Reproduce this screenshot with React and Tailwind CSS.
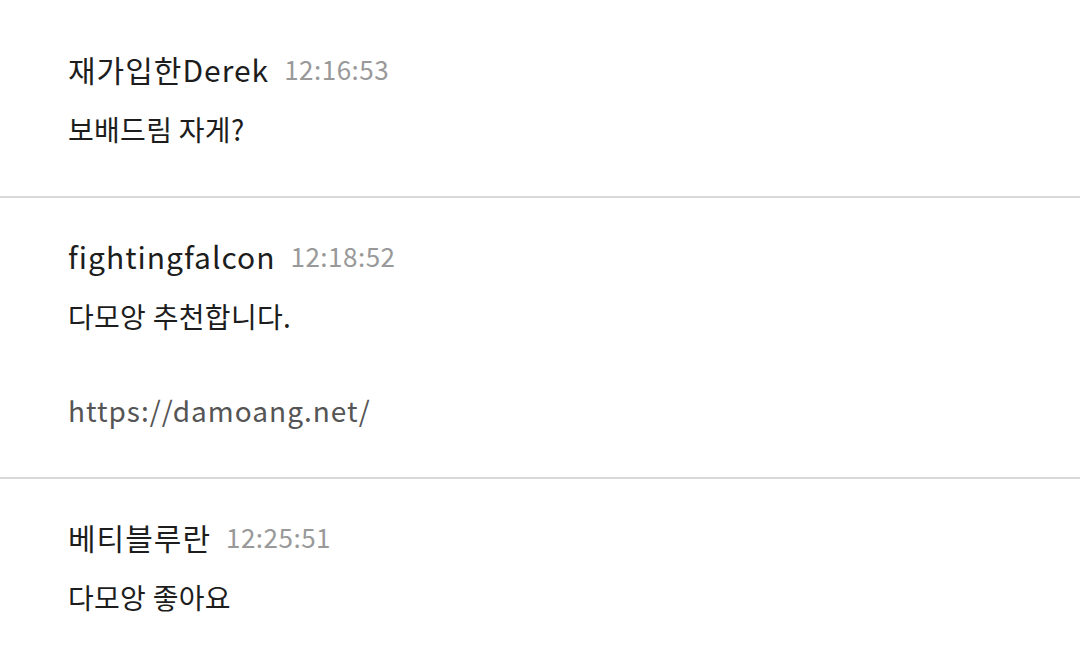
export default function App() {
  const font = { fontFamily: '"Noto Sans CJK KR", "Noto Sans", sans-serif' };
  const items = [
    { name: '재가입한Derek', time: '12:16:53', lines: ['보배드림 자게?'], first: true },
    { name: 'fightingfalcon', time: '12:18:52', lines: ['다모앙 추천합니다.'], link: 'https://damoang.net/' },
    { name: '베티블루란', time: '12:25:51', lines: ['다모앙 좋아요'], last: true },
  ];
  return (
    <div className="w-[1080px] h-[657px] bg-white overflow-hidden" style={font}>
      {items.map((it, i) => (
        <div
          key={i}
          className={`pl-[68px] ${it.first ? 'pt-[51px]' : 'pt-[40px]'} pb-[49px] ${it.last ? '' : 'border-b-2 border-[#d9d9d9]'}`}
        >
          <div className="flex items-center h-[36px] gap-[15px]">
            <span className="text-[30px] leading-[36px] tracking-[1px] text-[#1d1d1d]">{it.name}</span>
            <span className="text-[26px] leading-[36px] tracking-[0.5px] text-[#999999]">{it.time}</span>
          </div>
          <div className="mt-[24px] text-[28px] leading-[36px] tracking-[0.3px] text-[#1d1d1d]">{it.lines[0]}</div>
          {it.link && (
            <div className="mt-[58px] text-[28px] leading-[36px] tracking-[1px] text-[#555555]">{it.link}</div>
          )}
        </div>
      ))}
    </div>
  );
}
